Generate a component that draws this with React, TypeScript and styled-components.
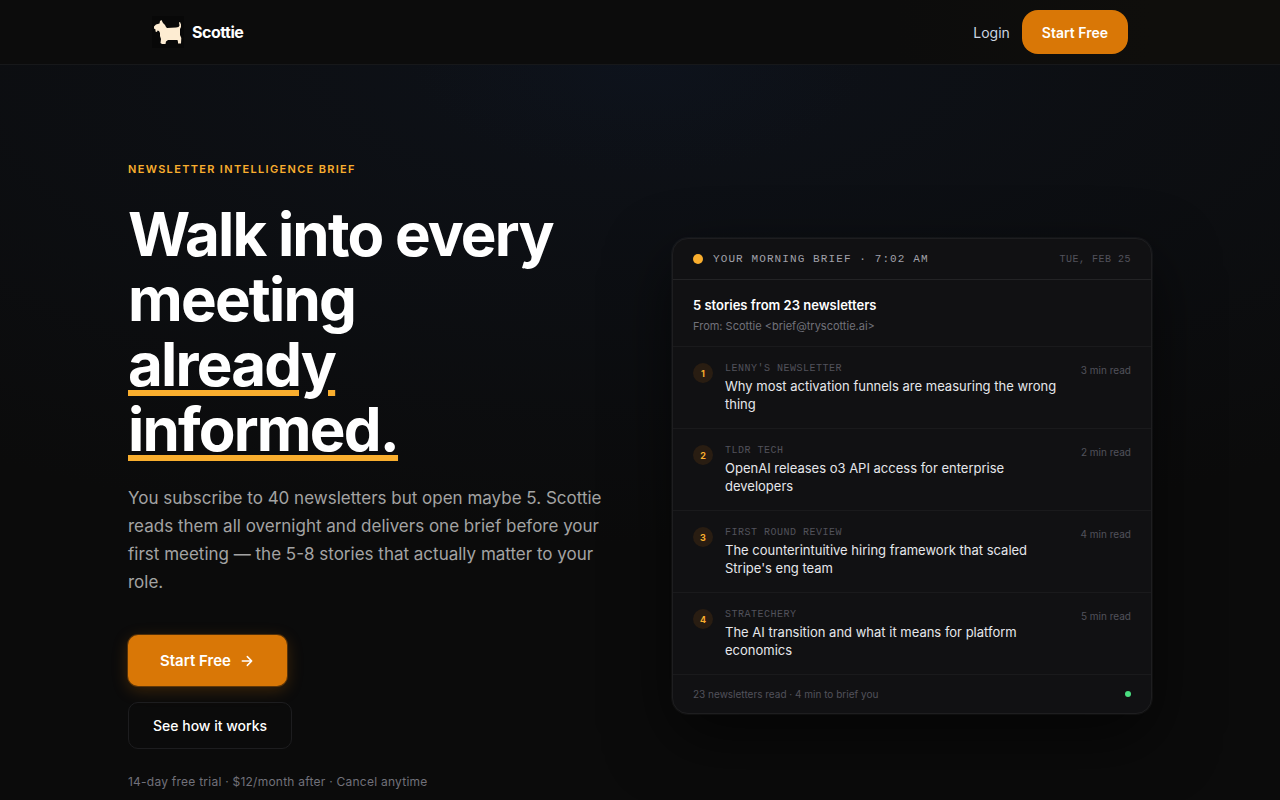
import React from "react";
import styled, { createGlobalStyle } from "styled-components";

const GlobalStyle = createGlobalStyle`
  *, *::before, *::after { box-sizing: border-box; }
  html { background: #0b0b0b; }
  body {
    margin: 0;
    color: #ffffff;
    font-family: Inter, "Liberation Sans", sans-serif;
  }
  h1, h2, h3, p, ol { margin: 0; padding: 0; }
  a { color: inherit; text-decoration: none; }
  button { font-family: inherit; cursor: pointer; }
`;

const Page = styled.div`
  min-height: 100vh;
  background:
    radial-gradient(ellipse 18% 110px at 50% 64px, rgba(13, 24, 42, 0.2), transparent),
    radial-gradient(ellipse 90% 480px at 50% 64px, rgba(15, 21, 32, 0.65), transparent),
    #0b0b0b;
`;

const Header = styled.header`
  border-bottom: 1px solid #17181a;
  background: linear-gradient(90deg, #0c0c0c 70%, #0f0e0c 90%);
`;

const HeaderInner = styled.div`
  display: flex;
  align-items: center;
  justify-content: space-between;
  max-width: 1024px;
  height: 64px;
  margin: 0 auto;
  padding: 0 24px;
`;

const Brand = styled.a`
  display: flex;
  align-items: center;
  gap: 8px;
  font-size: 16px;
  font-weight: 700;
  letter-spacing: -0.03em;
`;

const Nav = styled.nav`
  display: flex;
  align-items: center;
  gap: 12px;
`;

const NavLink = styled.a`
  color: #cbd5e1;
  font-size: 14px;
`;

const Button = styled.button<{ $variant: "nav" | "primary" | "outline" }>`
  display: inline-flex;
  align-items: center;
  justify-content: center;
  gap: 8px;
  height: ${(p) => ({ nav: 44, primary: 51, outline: 47 })[p.$variant]}px;
  padding: 0 ${(p) => ({ nav: 20, primary: 32, outline: 24 })[p.$variant]}px;
  border: ${(p) => (p.$variant === "outline" ? "1px solid #1d1d1f" : "0")};
  border-radius: ${(p) => (p.$variant === "nav" ? 16 : 10)}px;
  background: ${(p) => (p.$variant === "outline" ? "transparent" : "#d97706")};
  box-shadow: ${(p) =>
    p.$variant === "primary"
      ? "0 0 0 1px rgba(217, 119, 6, 0.3), 0 4px 16px rgba(217, 119, 6, 0.25)"
      : "none"};
  color: #ffffff;
  font-size: ${(p) => (p.$variant === "primary" ? 15 : 14)}px;
  font-weight: ${(p) => (p.$variant === "outline" ? 500 : 600)};
`;

const Hero = styled.main`
  display: grid;
  grid-template-columns: repeat(2, minmax(0, 1fr));
  align-items: center;
  gap: 64px;
  max-width: 1024px;
  margin: 0 auto;
  padding: 96px 0;

  @media (max-width: 1023px) {
    grid-template-columns: minmax(0, 1fr);
    padding: 64px 24px;
  }
`;

const Eyebrow = styled.p`
  margin-bottom: 24px;
  color: #f9ae2e;
  font-size: 11px;
  font-weight: 600;
  line-height: 17px;
  letter-spacing: 0.12em;
  text-transform: uppercase;
`;

const Title = styled.h1`
  margin-bottom: 22px;
  font-size: 60px;
  font-weight: 700;
  line-height: 65px;
  letter-spacing: -0.03em;
`;

const Underlined = styled.span`
  text-decoration: underline;
  text-decoration-color: #f9ae2e;
  text-decoration-thickness: 6px;
  text-underline-offset: 4px;
`;

const Lead = styled.p`
  margin-bottom: 39px;
  color: #a3a3a3;
  font-size: 17px;
  line-height: 28px;
`;

const Actions = styled.div`
  display: flex;
  flex-direction: column;
  align-items: flex-start;
  gap: 16px;
  margin-bottom: 24px;
`;

const FinePrint = styled.p`
  color: #71717a;
  font-size: 12px;
  line-height: 18px;
  letter-spacing: 0.02em;
`;

const Card = styled.section`
  overflow: hidden;
  border: 1px solid #1e1e20;
  border-radius: 16px;
  background: #111113;
  box-shadow: 0 0 0 1px rgba(255, 255, 255, 0.04), 0 24px 64px rgba(0, 0, 0, 0.6);
`;

const CardBar = styled.div`
  display: flex;
  align-items: center;
  gap: 10px;
  height: 41px;
  padding: 0 20px;
  border-bottom: 1px solid #232325;
`;

const Dot = styled.span<{ $size: number; $color: string }>`
  flex: none;
  width: ${(p) => p.$size}px;
  height: ${(p) => p.$size}px;
  border-radius: 50%;
  background: ${(p) => p.$color};
`;

const BarTitle = styled.h2`
  flex: 1;
  color: #a1a1aa;
  font-family: "Liberation Mono", monospace;
  font-size: 11px;
  font-weight: 400;
  letter-spacing: 0.1em;
  text-transform: uppercase;
`;

const MonoLabel = styled.p`
  color: #52525b;
  font-family: "Liberation Mono", monospace;
  font-size: 10px;
  line-height: 15px;
  letter-spacing: 0.05em;
  text-transform: uppercase;
`;

const Subject = styled.div`
  padding: 15px 20px 11px;
  border-bottom: 1px solid #1a1a1c;
`;

const SubjectTitle = styled.h3`
  margin-bottom: 3px;
  font-size: 13px;
  font-weight: 600;
  line-height: 20px;
`;

const Sender = styled.p`
  color: #71717a;
  font-size: 11px;
  line-height: 17px;
`;

const Stories = styled.ol`
  list-style: none;
`;

const Story = styled.li`
  display: flex;
  align-items: flex-start;
  gap: 12px;
  padding: 14px 20px 15px;
  border-bottom: 1px solid #1a1a1c;
`;

const Rank = styled.span`
  display: flex;
  flex: none;
  align-items: center;
  justify-content: center;
  width: 20px;
  height: 20px;
  margin-top: 2px;
  border-radius: 50%;
  background: #291d12;
  color: #f9ae2e;
  font-size: 9px;
  font-weight: 700;
`;

const StoryBody = styled.div`
  flex: 1;
  min-width: 0;
`;

const Headline = styled.p`
  margin-top: 1px;
  color: #e5e7eb;
  font-size: 13px;
  line-height: 18px;
`;

const Meta = styled.span`
  flex: none;
  color: #52525b;
  font-size: 10px;
  line-height: 19px;
`;

const CardFooter = styled.div`
  display: flex;
  align-items: center;
  justify-content: space-between;
  height: 38px;
  padding: 0 20px;
`;

const stories = [
  { source: "Lenny's Newsletter", title: "Why most activation funnels are measuring the wrong thing", minutes: 3 },
  { source: "TLDR Tech", title: "OpenAI releases o3 API access for enterprise developers", minutes: 2 },
  { source: "First Round Review", title: "The counterintuitive hiring framework that scaled Stripe's eng team", minutes: 4 },
  { source: "Stratechery", title: "The AI transition and what it means for platform economics", minutes: 5 },
];

const ScottieLogo = () => (
  <svg width="32" height="32" viewBox="0 0 32 32" aria-hidden="true">
    <rect width="32" height="32" fill="#080808" />
    <path
      fill="#fdecd2"
      d="M9.5 4L11 7L13 9L14 11L15 12L24 11.5L26.5 11L27.5 9.5L27 6.5L28 6L29 8.5V11L28 13V19L29.3 22L29 27.5H26V26L25.5 24H22L16 24L14 25.5L13.500 28H10L8.500 27L9 23L8 20V17L7 15L5.500 14.5L5 16L3.500 15.500V13.500L2 12.500V10.500L4 8.500L7.500 7.500L8 5Z"
    />
  </svg>
);

const ArrowRight = () => (
  <svg width="16" height="16" viewBox="0 0 16 16" fill="none" stroke="currentColor" strokeWidth="1.500" strokeLinecap="round" strokeLinejoin="round" aria-hidden="true">
    <path d="M3.300 8h9.400M8.300 3.600l4.400 4.400-4.400 4.400" />
  </svg>
);

export default function App() {
  return (
    <Page>
      <GlobalStyle />
      <Header>
        <HeaderInner>
          <Brand href="#">
            <ScottieLogo />
            Scottie
          </Brand>
          <Nav>
            <NavLink href="#login">Login</NavLink>
            <Button $variant="nav">Start Free</Button>
          </Nav>
        </HeaderInner>
      </Header>
      <Hero>
        <div>
          <Eyebrow>Newsletter Intelligence Brief</Eyebrow>
          <Title>
            Walk into every meeting
            <br />
            <Underlined>
              already
              <br />
              informed.
            </Underlined>
          </Title>
          <Lead>
            You subscribe to 40 newsletters but open maybe 5. Scottie reads them all overnight and
            delivers one brief before your first meeting — the 5-8 stories that actually matter to
            your role.
          </Lead>
          <Actions>
            <Button $variant="primary">
              Start Free
              <ArrowRight />
            </Button>
            <Button $variant="outline">See how it works</Button>
          </Actions>
          <FinePrint>14-day free trial · $12/month after · Cancel anytime</FinePrint>
        </div>
        <Card>
          <CardBar>
            <Dot $size={10} $color="#f9ae2e" />
            <BarTitle>Your Morning Brief · 7:02 AM</BarTitle>
            <MonoLabel>Tue, Feb 25</MonoLabel>
          </CardBar>
          <Subject>
            <SubjectTitle>5 stories from 23 newsletters</SubjectTitle>
            <Sender>From: Scottie &lt;brief@tryscottie.ai&gt;</Sender>
          </Subject>
          <Stories>
            {stories.map((story, i) => (
              <Story key={story.source}>
                <Rank>{i + 1}</Rank>
                <StoryBody>
                  <MonoLabel>{story.source}</MonoLabel>
                  <Headline>{story.title}</Headline>
                </StoryBody>
                <Meta>{story.minutes} min read</Meta>
              </Story>
            ))}
          </Stories>
          <CardFooter>
            <Meta>23 newsletters read · 4 min to brief you</Meta>
            <Dot $size={6} $color="#4ade80" />
          </CardFooter>
        </Card>
      </Hero>
    </Page>
  );
}
